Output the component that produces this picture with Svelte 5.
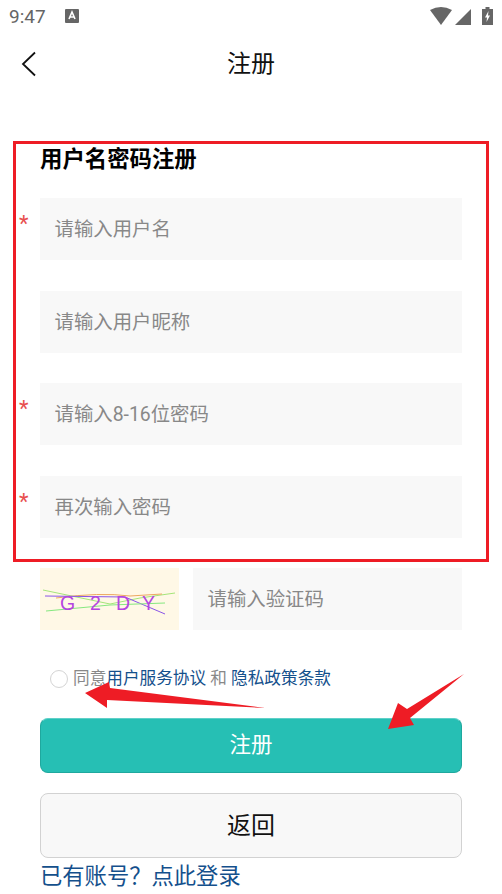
<script>
  const fields = [
    { placeholder: '请输入用户名', required: true },
    { placeholder: '请输入用户昵称', required: false },
    { placeholder: '请输入8-16位密码', required: true },
    { placeholder: '再次输入密码', required: true }
  ];
</script>

<main>
  <div class="status">
    <span class="time">9:47</span>
    <svg class="notice" width="14" height="14" viewBox="0 0 14 14">
      <rect width="14" height="14" rx="1" fill="#666" />
      <path d="M4 10 L7 3 L10 10 M5.2 8 H8.8" stroke="#fff" stroke-width="1.6" fill="none" />
    </svg>
    <span class="spacer"></span>
    <svg width="22" height="18" viewBox="0 0 22 18"><path d="M0 3 Q11 -3 22 3 L11 18 Z" fill="#666" /></svg>
    <svg class="signal" width="16" height="16" viewBox="0 0 16 16"><path d="M16 0 V16 H0 Z" fill="#666" /></svg>
    <svg class="battery" width="11" height="18" viewBox="0 0 11 18">
      <path d="M3.5 0 H7.5 V2 H11 V18 H0 V2 H3.5 Z" fill="#666" />
      <path d="M6.5 4 L3 10.5 H5 L4.5 15 L8 8.5 H6 Z" fill="#fff" />
    </svg>
  </div>

  <header>
    <svg class="back" width="16" height="26" viewBox="0 0 16 26">
      <path d="M14 1.5 L2 13 L14 24.5" stroke="#111" stroke-width="1.8" fill="none" />
    </svg>
    <h1>注册</h1>
  </header>

  <section class="form">
    <h2>用户名密码注册</h2>
    {#each fields as field}
      <div class="field">
        {#if field.required}<span class="star">*</span>{/if}
        <div class="input">{field.placeholder}</div>
      </div>
    {/each}

    <div class="captcha-row">
      <svg class="captcha" width="139" height="62" viewBox="0 0 139 62">
        <rect width="139" height="62" fill="#fff8e6" />
        <path d="M3 22 L70 36 L100 30 L135 25" stroke="#a5e57a" stroke-width="1" fill="none" />
        <path d="M16 30 Q60 24 90 28 L122 26" stroke="#eda860" stroke-width="1" fill="none" />
        <path d="M5 28 L85 29 L125 46" stroke="#8a55e8" stroke-width="1" fill="none" />
        <path d="M6 43 L70 37 L125 35" stroke="#86e880" stroke-width="1" fill="none" />
        <text x="20" y="42" class="code">G</text>
        <text x="50" y="42" class="code">2</text>
        <text x="76" y="42" class="code">D</text>
        <text x="102" y="42" class="code">Y</text>
      </svg>
      <div class="input">请输入验证码</div>
    </div>

    <div class="agree">
      <span class="radio"></span>
      <p>同意<a href="#a">用户服务协议</a> 和 <a href="#b">隐私政策条款</a></p>
    </div>

    <button class="primary">注册</button>
    <button class="secondary">返回</button>
    <a class="login" href="#c">已有账号？点此登录</a>
  </section>

  <!-- annotations over the screenshot -->
  <div class="mark"></div>
  <svg class="arrows" width="502" height="894" viewBox="0 0 502 894">
    <path d="M85 693 L109 682 L110 688 L265 708 L107 700 L107 708 Z" fill="#ee1c25" />
    <path d="M464 674 L410 718 L414 725 L388 729 L398 703 L407 709 Z" fill="#ee1c25" />
  </svg>
</main>

<style>
  :global(body) {
    background: #fff;
    font-family: "Roboto", "Noto Sans CJK SC", sans-serif;
  }

  main {
    position: relative;
    width: 502px;
    height: 894px;
    overflow: hidden;
  }

  .status {
    display: flex;
    align-items: center;
    height: 32px;
    padding: 0 9px 0 9px;
    color: #666;
  }

  .time {
    font-size: 19px;
    margin-right: 19px;
  }

  .spacer {
    flex: 1;
  }

  .signal {
    margin: 1px 11px 0 3px;
  }

  header {
    position: relative;
    height: 64px;
    padding-bottom: 6px;
    box-sizing: border-box;
    display: flex;
    align-items: center;
    justify-content: center;
  }

  .back {
    position: absolute;
    left: 21px;
    top: 19px;
  }

  h1 {
    margin: 0;
    font-size: 24px;
    font-weight: 400;
    color: #111;
  }

  .form {
    padding: 50px 40px 0;
  }

  h2 {
    margin: 0 0 25px;
    height: 27px;
    line-height: 27px;
    font-size: 22.4px;
    font-weight: 700;
    color: #000;
  }

  .field {
    position: relative;
    margin-bottom: 30.6px;
  }

  .star {
    position: absolute;
    left: -21px;
    top: 15px;
    font-size: 22px;
    line-height: 22px;
    color: #e8504f;
  }

  .input {
    height: 62px;
    line-height: 63px;
    padding-left: 14.5px;
    background: #f8f8f8;
    font-size: 19.4px;
    color: #888;
  }

  .captcha-row {
    display: flex;
    gap: 14px;
  }

  .captcha-row .input {
    flex: 1;
  }

  .code {
    font-family: "Liberation Sans", sans-serif;
    font-size: 19.5px;
    fill: #b445e0;
  }

  .agree {
    display: flex;
    align-items: center;
    margin: 37px 0 27px 10px;
    height: 24px;
  }

  .radio {
    width: 16px;
    height: 16px;
    margin-right: 5px;
    border: 1px solid #d4d4d4;
    border-radius: 50%;
  }

  .agree p {
    margin: 0;
    font-size: 16.65px;
    line-height: 24px;
    color: #888;
    white-space: pre;
  }

  .agree a {
    color: #14508c;
    text-decoration: none;
  }

  button {
    display: block;
    width: 422px;
    font-family: inherit;
    border-radius: 8px;
  }

  .primary {
    height: 55px;
    margin-bottom: 20px;
    padding-bottom: 7px;
    background: #26bfb4;
    border: 1px solid #1fa89e;
    border-top-color: #5fd0c8;
    color: #fff;
    font-size: 21.5px;
  }

  .secondary {
    height: 65px;
    padding-bottom: 5px;
    background: #f8f8f8;
    border: 1px solid #d2d2d2;
    color: #111;
    font-size: 24px;
  }

  .login {
    display: block;
    margin-top: 2px;
    font-size: 22.3px;
    line-height: 32px;
    color: #14508c;
    text-decoration: none;
  }

  .mark {
    position: absolute;
    left: 13px;
    top: 141px;
    width: 470px;
    height: 415px;
    border: 3px solid #ee1c25;
  }

  .arrows {
    position: absolute;
    left: 0;
    top: 0;
    pointer-events: none;
  }
</style>
